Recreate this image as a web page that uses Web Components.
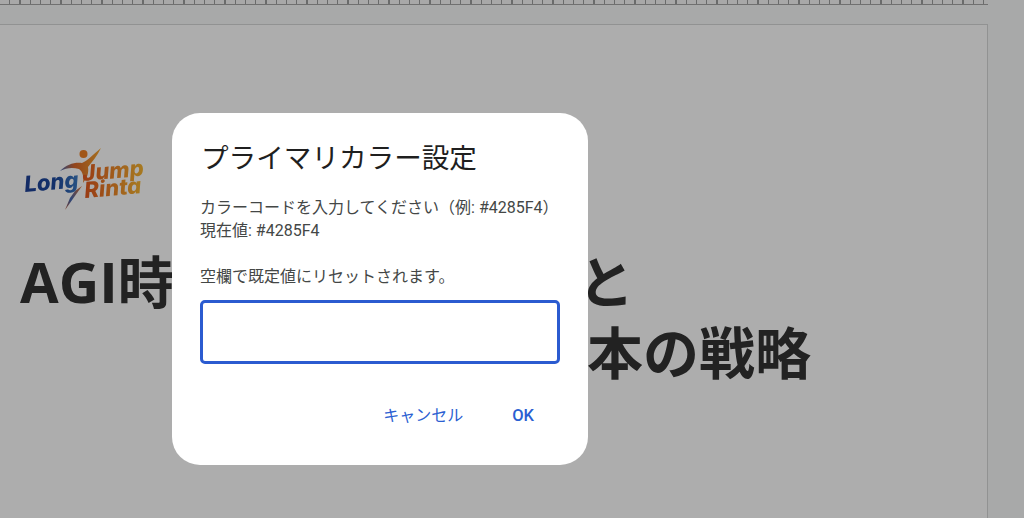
<!DOCTYPE html>
<html lang="ja">
<head>
<meta charset="utf-8">
<title>プライマリカラー設定</title>
<style>
html,body{margin:0;height:100%;overflow:hidden}
body{background:#f8f9fa;font-family:Roboto,"Noto Sans CJK JP",sans-serif}
</style>
</head>
<body>
<editor-shell>
  <slide-ruler></slide-ruler>
  <slide-page>
    <brand-logo></brand-logo>
    <slide-title></slide-title>
  </slide-page>
</editor-shell>
<modal-scrim>
  <prompt-dialog heading="プライマリカラー設定">
    <span>カラーコードを入力してください（例: #4285F4）</span>
    <span>現在値: #4285F4</span>
    <span>&nbsp;</span>
    <span>空欄で既定値にリセットされます。</span>
  </prompt-dialog>
</modal-scrim>
<script>
function def(name, html, init){
  customElements.define(name, class extends HTMLElement{
    constructor(){super();this.attachShadow({mode:'open'}).innerHTML=html;}
    connectedCallback(){ if(init) init.call(this); }
  });
}
def('editor-shell',`<style>:host{display:flex;flex-direction:column;height:518px;box-sizing:border-box;padding-right:36px}</style><slot></slot>`);
def('slide-ruler',`<style>:host{display:block;height:5px;flex:none;margin-bottom:19px;box-sizing:border-box;
  border-bottom:1.5px solid #a5a6a6;
  background:repeating-linear-gradient(90deg,#f8f8f8 0 9.2px,#9d9e9e 9.2px 10.25px);}</style>`);
def('slide-page',`<style>:host{display:block;flex:1;box-sizing:border-box;background:#fff;
  border-top:1.5px solid #d6d7d7;border-right:1.5px solid #d6d7d7;padding:119px 0 0 20px}</style><slot></slot>`);
def('brand-logo',`<style>:host{display:block;width:130px;height:72px}
svg{display:block;overflow:visible;filter:blur(.35px)}
text{font-family:Inter,"Liberation Sans",sans-serif;font-weight:800;font-style:italic}</style>
<svg width="130" height="72" viewBox="0 0 130 72">
<defs>
<linearGradient id="g1" x1="0" x2="1"><stop offset="0" stop-color="#1c3f95"/><stop offset=".6" stop-color="#1d4a9e"/><stop offset="1" stop-color="#3d7cc4"/></linearGradient>
<linearGradient id="g2" x1="0" x2="1"><stop offset="0" stop-color="#e2571e"/><stop offset="1" stop-color="#f6b532"/></linearGradient>
<linearGradient id="g3" x1="0" x2="1"><stop offset="0" stop-color="#3f67b4"/><stop offset=".35" stop-color="#d9662a"/><stop offset="1" stop-color="#f4a52e"/></linearGradient>
<linearGradient id="g4" x1="1" y1="0" x2="0" y2="1"><stop offset="0" stop-color="#e9722a"/><stop offset=".6" stop-color="#3f67b4"/><stop offset="1" stop-color="#c0552a"/></linearGradient>
</defs>
<path d="M40 27C47 20 55 18 62 19C67 17 74 10 81 4C77 12 72 18 68 23C69 29 67 34 63 39C64 33 63 28 59 25C52 23 46 24 40 27Z" fill="url(#g3)"/>
<circle cx="63.500" cy="10" r="4" fill="#ee7f22"/>
<path d="M62 42L45 66L50 54L55 47Z" fill="url(#g4)"/>
<text transform="translate(5 48) rotate(-5)" font-size="22" fill="url(#g1)">Long</text>
<text transform="translate(63 37) rotate(-5)" font-size="22" fill="url(#g2)">Jump</text>
<text transform="translate(65 54) rotate(-5)" font-size="22" fill="url(#g2)">Rinta</text>
</svg>`);
def('slide-title',`<style>:host{display:block;margin-top:30px;font:700 56px/71px "Open Sans","Noto Sans CJK JP",sans-serif;color:#333;white-space:nowrap}
.l{display:flex;height:71px}.a{width:558px;flex:none}.b{width:567px;flex:none}</style>
<div class="l"><span class="a">AGI時</span><span>と</span></div>
<div class="l"><span class="b"></span><span>本の戦略</span></div>`);
def('modal-scrim',`<style>:host{position:fixed;inset:0;background:rgba(0,0,0,.32);display:block}</style><slot></slot>`);
def('prompt-dialog',`<style>
:host{position:absolute;left:172px;top:113px;width:416px;height:352px;box-sizing:border-box;background:#fff;border-radius:28px;
  padding:26px 28px 0;display:flex;flex-direction:column;font-family:Roboto,"Noto Sans CJK JP",sans-serif}
h2{margin:0 0 0 1px;font:400 27.6px/40px Roboto,"Noto Sans CJK JP",sans-serif;color:#1f1f1f}
.msg{margin-top:17px;display:flex;flex-direction:column;font-size:16px;line-height:23px;color:#444746}
.field{margin-top:12.2px;height:64px;box-sizing:border-box;border:3px solid #2b5bd0;border-radius:5px}
.acts{display:flex;justify-content:flex-end;gap:49px;margin-top:42px;padding-right:26px}
.acts span{font-size:16px;line-height:20px;font-weight:500;color:#2b5fd2}
.acts span:first-child{font-weight:400}
.acts span:last-child{font-size:16.500px}
</style>
<h2></h2>
<div class="msg"><slot></slot></div>
<div class="field" role="textbox"></div>
<div class="acts"><span>キャンセル</span><span>OK</span></div>`,function(){
  this.shadowRoot.querySelector('h2').textContent=this.getAttribute('heading');
});
</script>
</body>
</html>
